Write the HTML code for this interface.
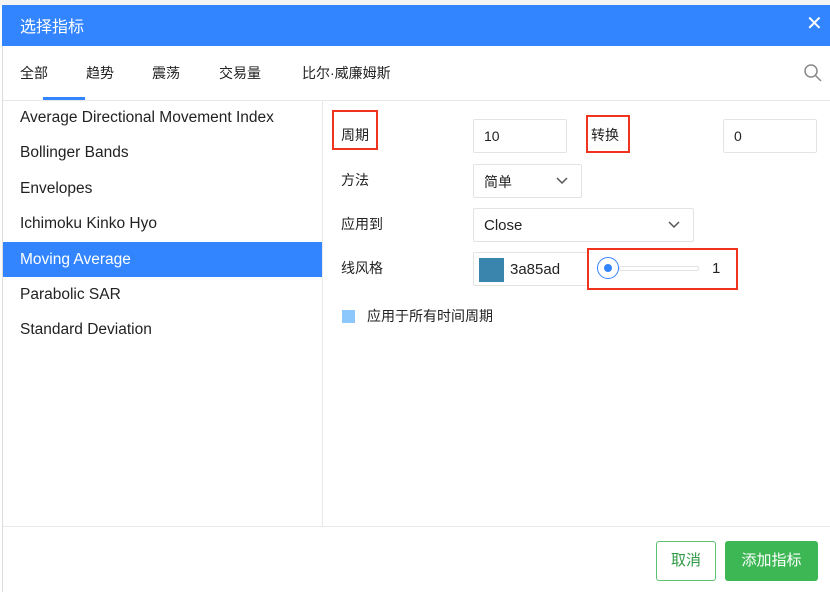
<html><head><style>
*{margin:0;padding:0;box-sizing:border-box}
body{width:830px;height:592px;overflow:hidden;background:#fff;font-family:"Liberation Sans","Noto Sans CJK SC",sans-serif;font-size:14px;color:#222;position:relative}
.a{position:absolute}
.hdr{left:2px;top:5px;width:828px;height:41px;background:#3385ff;color:#fff;font-size:16px}
.inp{border:1px solid #e3e3e3;border-radius:2px;background:#fff}
.red{border:2px solid #f0331f}
.li{left:20px;font-size:15.5px}
</style></head><body>
<div class="a" style="left:0;top:0;width:830px;height:5px;background:#f4f4f4"></div>
<div class="a hdr"><span class="a" style="left:18px;top:8px">选择指标</span><span class="a" style="left:804px;top:6px;font-size:20px">✕</span></div>
<div class="a" style="left:2px;top:46px;width:1px;height:546px;background:#ddd"></div>
<div class="a" style="left:20px;top:63px">全部</div>
<div class="a" style="left:86px;top:63px">趋势</div>
<div class="a" style="left:152px;top:63px">震荡</div>
<div class="a" style="left:219px;top:63px">交易量</div>
<div class="a" style="left:302px;top:63px">比尔·威廉姆斯</div>
<div class="a" style="left:43px;top:97px;width:42px;height:3px;background:#3385ff"></div>
<svg class="a" style="left:803px;top:63px" width="20" height="20"><circle cx="8" cy="8" r="6" fill="none" stroke="#888" stroke-width="1.5"/><line x1="12.5" y1="12.5" x2="18" y2="18" stroke="#888" stroke-width="1.5"/></svg>
<div class="a" style="left:3px;top:100px;width:827px;height:1px;background:#e8e8e8"></div>
<div class="a" style="left:322px;top:101px;width:1px;height:425px;background:#e8e8e8"></div>
<div class="a li" style="top:109px">Average Directional Movement Index</div>
<div class="a li" style="top:144px">Bollinger Bands</div>
<div class="a li" style="top:180px">Envelopes</div>
<div class="a li" style="top:215px">Ichimoku Kinko Hyo</div>
<div class="a" style="left:3px;top:242px;width:319px;height:35px;background:#3385ff"></div>
<div class="a li" style="top:251px;color:#fff">Moving Average</div>
<div class="a li" style="top:286px">Parabolic SAR</div>
<div class="a li" style="top:321px">Standard Deviation</div>

<div class="a red" style="left:332px;top:110px;width:46px;height:40px"></div>
<div class="a" style="left:341px;top:125px">周期</div>
<div class="a inp" style="left:473px;top:119px;width:94px;height:34px"><span class="a" style="left:10px;top:8px">10</span></div>
<div class="a red" style="left:586px;top:115px;width:44px;height:38px"></div>
<div class="a" style="left:591px;top:125px">转换</div>
<div class="a inp" style="left:723px;top:119px;width:94px;height:34px"><span class="a" style="left:10px;top:8px">0</span></div>
<div class="a" style="left:341px;top:170px">方法</div>
<div class="a inp" style="left:473px;top:164px;width:109px;height:34px"><span class="a" style="left:10px;top:7px">简单</span><svg class="a" style="left:82px;top:12px" width="12" height="8"><path d="M1 1L6 6L11 1" fill="none" stroke="#555" stroke-width="1.5"/></svg></div>
<div class="a" style="left:341px;top:214px">应用到</div>
<div class="a inp" style="left:473px;top:208px;width:221px;height:34px"><span class="a" style="left:10px;top:8px;font-size:15px">Close</span><svg class="a" style="left:194px;top:12px" width="12" height="8"><path d="M1 1L6 6L11 1" fill="none" stroke="#555" stroke-width="1.5"/></svg></div>
<div class="a" style="left:341px;top:258px">线风格</div>
<div class="a inp" style="left:473px;top:252px;width:120px;height:34px"><div class="a" style="left:5px;top:5px;width:25px;height:24px;background:#3a85ad"></div><span class="a" style="left:36px;top:8px;font-size:15px">3a85ad</span></div>
<div class="a red" style="left:587px;top:248px;width:151px;height:42px;background:#fff"></div>
<div class="a" style="left:597px;top:257px;width:22px;height:22px;border:1px solid #3385ff;border-radius:50%;background:#fff"></div>
<div class="a" style="left:604px;top:264px;width:8px;height:8px;border-radius:50%;background:#3385ff"></div>
<div class="a" style="left:619px;top:266px;width:80px;height:5px;border:1px solid #e3e3e3;border-radius:2px"></div>
<div class="a" style="left:712px;top:260px;font-size:15px">1</div>
<div class="a" style="left:342px;top:310px;width:13px;height:13px;background:#8cc8fb"></div>
<div class="a" style="left:367px;top:306px">应用于所有时间周期</div>

<div class="a" style="left:3px;top:526px;width:827px;height:1px;background:#e8e8e8"></div>
<div class="a" style="left:656px;top:541px;width:60px;height:40px;border:1px solid #5cc270;border-radius:3px;color:#2f9a45;font-size:15px;text-align:center;line-height:38px">取消</div>
<div class="a" style="left:725px;top:541px;width:93px;height:40px;background:#3db754;border-radius:3px;color:#fff;font-size:15px;text-align:center;line-height:40px">添加指标</div>
</body></html>
